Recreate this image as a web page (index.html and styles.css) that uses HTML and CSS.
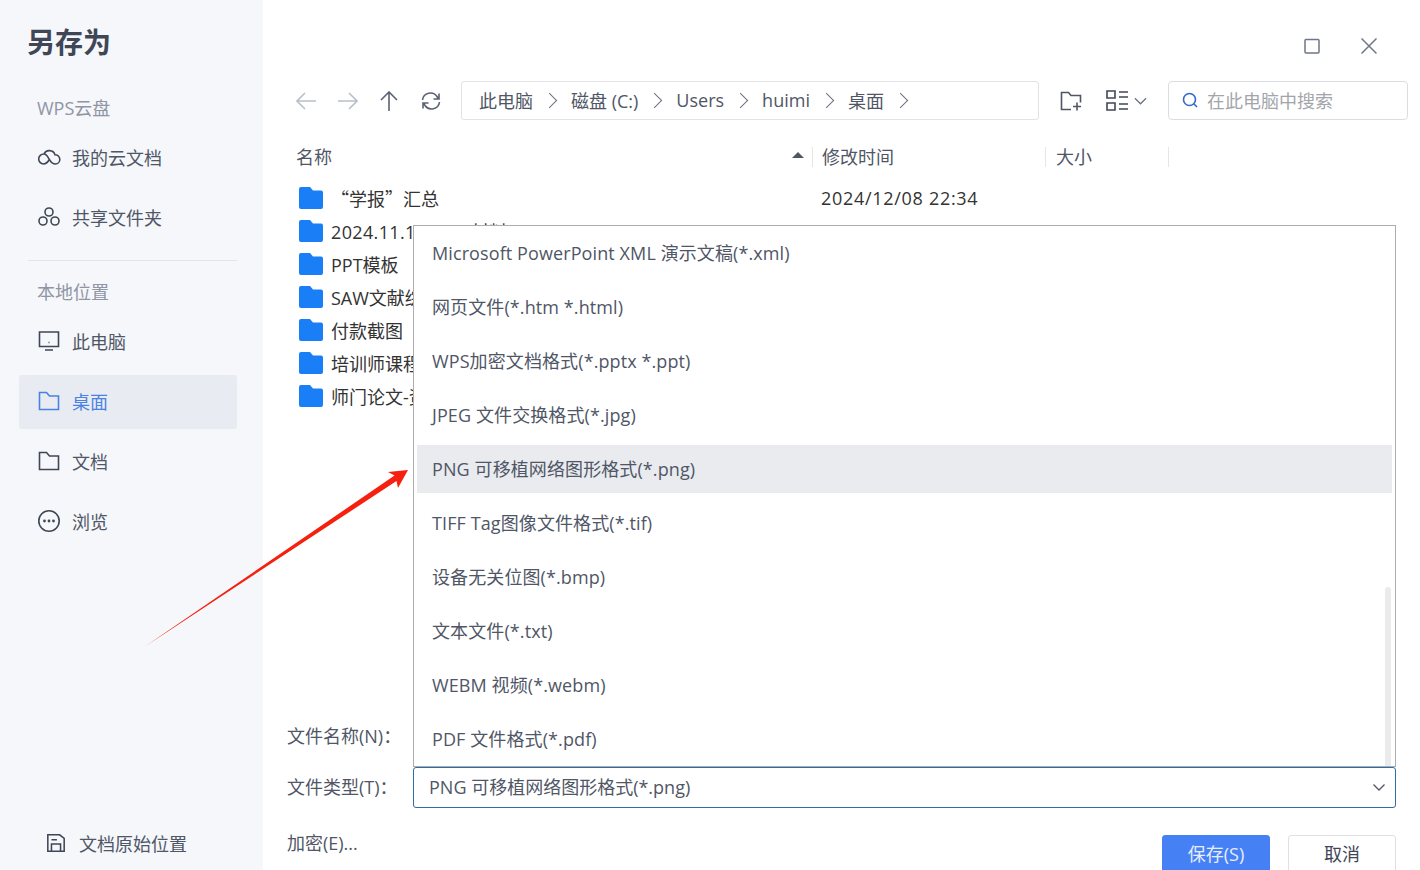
FILE: index.html
```html
<!DOCTYPE html>
<html lang="zh-CN">
<head>
    <meta charset="UTF-8">
    <meta name="viewport" content="width=device-width, initial-scale=1.0">
    <title>另存为</title>
    <link rel="stylesheet" href="styles.css">
</head>
<body>
    <div class="dialog">
        <!-- Left column -->
        <aside class="sidebar">
            <h1 class="title">另存为</h1>
            <div class="section-label">WPS云盘</div>
            <a class="nav-item">
                <svg class="nav-icon" viewBox="0 0 24 24"><path d="M6.500 19a5 5 0 1 1 .4-10A6 6 0 0 1 18 9.800a4.600 4.600 0 1 1 .4 9.200c-3.400 0-4.500-2.200-6-4.500s-2.600-5.500-5.500-5.500M6.500 19c3 0 4.500-2.200 5.900-4.500"/></svg>
                <span>我的云文档</span>
            </a>
            <a class="nav-item">
                <svg class="nav-icon" viewBox="0 0 24 24"><circle cx="12" cy="7" r="4"/><circle cx="6" cy="16" r="4"/><circle cx="18" cy="16" r="4"/></svg>
                <span>共享文件夹</span>
            </a>
            <div class="divider"></div>
            <div class="section-label">本地位置</div>
            <a class="nav-item">
                <svg class="nav-icon" viewBox="0 0 24 24"><path d="M2.500 3h19v14.500h-19zM8 21h8M11.500 13.500h1"/></svg>
                <span>此电脑</span>
            </a>
            <a class="nav-item active">
                <svg class="nav-icon" viewBox="0 0 24 24"><path d="M2.500 3.500h7l3 3.500h9v13.500h-19z"/></svg>
                <span>桌面</span>
            </a>
            <a class="nav-item">
                <svg class="nav-icon" viewBox="0 0 24 24"><path d="M2.500 3.500h7l3 3.500h9v13.500h-19z"/></svg>
                <span>文档</span>
            </a>
            <a class="nav-item">
                <svg class="nav-icon" viewBox="0 0 24 24"><circle cx="12" cy="12" r="10.200"/><circle class="dot" cx="7.500" cy="12" r="1.400"/><circle class="dot" cx="12" cy="12" r="1.400"/><circle class="dot" cx="16.500" cy="12" r="1.400"/></svg>
                <span>浏览</span>
            </a>
            <a class="origin-link">
                <svg class="origin-icon" viewBox="0 0 22 22"><path d="M2 2h13l5 4v14H2zM6 20v-8h10v8M6 7.500h6"/></svg>
                <span>文档原始位置</span>
            </a>
        </aside>

        <main class="content">
            <div class="window-controls">
                <svg class="win-btn" viewBox="0 0 16 16"><rect x="1" y="1.500" width="14" height="13.500" rx="1"/></svg>
                <svg class="win-btn" viewBox="0 0 16 16"><path d="M.5.500l15 15M15.500.500l-15 15"/></svg>
            </div>

            <div class="toolbar">
                <div class="nav-buttons">
                    <svg class="tool-icon off" viewBox="0 0 20 20"><path d="M20 10H1M9 2l-8 8 8 8"/></svg>
                    <svg class="tool-icon off" viewBox="0 0 20 20"><path d="M0 10h19M11 2l8 8-8 8"/></svg>
                    <svg class="tool-icon" viewBox="0 0 20 20"><path d="M10 20V1M2 9l8-8 8 8"/></svg>
                    <svg class="tool-icon" viewBox="0 0 20 20"><path d="M1.500 9A8 8 0 0 1 16 5.500l1.500 2.500M18.500 11A8 8 0 0 1 4 14.500L2.500 12M18 2.500v5.500h-5.500M2 17.500V12h5.500"/></svg>
                </div>
                <div class="breadcrumb">
                    <span>此电脑</span><i class="crumb-arrow"></i>
                    <span>磁盘 (C:)</span><i class="crumb-arrow"></i>
                    <span>Users</span><i class="crumb-arrow"></i>
                    <span>huimi</span><i class="crumb-arrow"></i>
                    <span>桌面</span><i class="crumb-arrow"></i>
                </div>
                <svg class="new-folder" viewBox="0 0 22 20"><path d="M11 18.500H1.500V1.500h7l2.500 3h9.500v7M13 15.500h8M17 11.500v8"/></svg>
                <div class="view-switch">
                    <svg class="view-icon" viewBox="0 0 22 21"><path d="M1 1h8v7H1zM1 13h8v7H1zM13 2h9M13 7h9M13 14h9M13 19h9"/></svg>
                    <svg class="view-chevron" viewBox="0 0 14 8"><path d="M1 1l6 6 6-6"/></svg>
                </div>
                <div class="search">
                    <svg class="search-icon" viewBox="0 0 16 16"><circle cx="7.500" cy="7.500" r="6"/><path d="M12 12l3 3"/></svg>
                    <span>在此电脑中搜索</span>
                </div>
            </div>

            <div class="list-header">
                <div class="col col-name">名称<i class="sort-up"></i></div>
                <div class="col col-date">修改时间</div>
                <div class="col col-size">大小</div>
            </div>

            <ul class="file-list">
                <li><svg class="folder" viewBox="0 0 24 22"><path d="M2 0h9l3 3.500h8a2 2 0 0 1 2 2V20a2 2 0 0 1-2 2H2a2 2 0 0 1-2-2V2a2 2 0 0 1 2-2z"/></svg><span class="file-name cjk-first">“学报”汇总</span><span class="file-date">2024/12/08 22:34</span></li>
                <li><svg class="folder" viewBox="0 0 24 22"><path d="M2 0h9l3 3.500h8a2 2 0 0 1 2 2V20a2 2 0 0 1-2 2H2a2 2 0 0 1-2-2V2a2 2 0 0 1 2-2z"/></svg><span class="file-name digits">2024.11.15—20 材料</span></li>
                <li><svg class="folder" viewBox="0 0 24 22"><path d="M2 0h9l3 3.500h8a2 2 0 0 1 2 2V20a2 2 0 0 1-2 2H2a2 2 0 0 1-2-2V2a2 2 0 0 1 2-2z"/></svg><span class="file-name">PPT模板</span></li>
                <li><svg class="folder" viewBox="0 0 24 22"><path d="M2 0h9l3 3.500h8a2 2 0 0 1 2 2V20a2 2 0 0 1-2 2H2a2 2 0 0 1-2-2V2a2 2 0 0 1 2-2z"/></svg><span class="file-name">SAW文献综述</span></li>
                <li><svg class="folder" viewBox="0 0 24 22"><path d="M2 0h9l3 3.500h8a2 2 0 0 1 2 2V20a2 2 0 0 1-2 2H2a2 2 0 0 1-2-2V2a2 2 0 0 1 2-2z"/></svg><span class="file-name">付款截图</span></li>
                <li><svg class="folder" viewBox="0 0 24 22"><path d="M2 0h9l3 3.500h8a2 2 0 0 1 2 2V20a2 2 0 0 1-2 2H2a2 2 0 0 1-2-2V2a2 2 0 0 1 2-2z"/></svg><span class="file-name">培训师课程</span></li>
                <li><svg class="folder" viewBox="0 0 24 22"><path d="M2 0h9l3 3.500h8a2 2 0 0 1 2 2V20a2 2 0 0 1-2 2H2a2 2 0 0 1-2-2V2a2 2 0 0 1 2-2z"/></svg><span class="file-name">师门论文-资料</span></li>
            </ul>

            <div class="form-row">
                <label class="form-label">文件名称(N)：</label>
            </div>
            <div class="form-row">
                <label class="form-label">文件类型(T)：</label>
                <div class="type-select">
                    <span class="type-value">PNG 可移植网络图形格式(*.png)</span>
                    <svg class="select-chevron" viewBox="0 0 12 7"><path d="M.500.500L6 6l5.500-5.500"/></svg>
                </div>
            </div>
            <div class="action-row">
                <span class="encrypt">加密(E)...</span>
                <button class="btn btn-primary">保存(S)</button>
                <button class="btn">取消</button>
            </div>

            <!-- Open dropdown of the file type select -->
            <div class="type-popup">
                <div class="type-option">Microsoft PowerPoint XML 演示文稿(*.xml)</div>
                <div class="type-option">网页文件(*.htm *.html)</div>
                <div class="type-option">WPS加密文档格式(*.pptx *.ppt)</div>
                <div class="type-option">JPEG 文件交换格式(*.jpg)</div>
                <div class="type-option selected">PNG 可移植网络图形格式(*.png)</div>
                <div class="type-option">TIFF Tag图像文件格式(*.tif)</div>
                <div class="type-option">设备无关位图(*.bmp)</div>
                <div class="type-option">文本文件(*.txt)</div>
                <div class="type-option">WEBM 视频(*.webm)</div>
                <div class="type-option">PDF 文件格式(*.pdf)</div>
                <div class="popup-scroll"></div>
            </div>
        </main>

        <!-- Red annotation arrow on top of the screenshot -->
        <svg class="annotation" viewBox="0 0 1420 870"><polygon points="145,646.500 394.500,475.500 388,472 408,470 398,488 396.500,481"/></svg>
    </div>
</body>
</html>
```

FILE: styles.css
```css
html, body {
    margin: 0;
    padding: 0;
    height: 870px;
    overflow: hidden;
    background-color: white;
}

body {
    font-family: "Open Sans", "Noto Sans CJK SC", sans-serif;
    font-size: 18px;
    color: #4f5666;
}

.dialog {
    position: relative;
    display: flex;
    height: 870px;
}

/* sidebar */
.sidebar {
    position: relative;
    width: 263px;
    height: 870px;
    flex-shrink: 0;
    box-sizing: border-box;
    padding: 22px 26px 0 19px;
    background-color: #f5f7fa;
}

.title {
    margin: 0 0 0 8px;
    font-size: 28px;
    line-height: 40px;
    font-weight: 700;
    color: #3f4757;
}

.section-label {
    margin: 29px 0 6px 18px;
    height: 34px;
    line-height: 34px;
    color: #8f95a5;
}

.nav-item {
    display: flex;
    align-items: center;
    height: 54px;
    box-sizing: border-box;
    margin-top: 6px;
    padding: 0 0 2px 18px;
    border-radius: 3px;
    color: #4f5666;
}

.section-label + .nav-item {
    margin-top: 0;
}

.nav-item span {
    margin-left: 11px;
}

.nav-item.active {
    background-color: #e8ebf1;
    color: #4a82e4;
}

.nav-icon {
    width: 24px;
    height: 24px;
    fill: none;
    stroke: currentColor;
    stroke-width: 1.600;
    color: #3f4757;
}

.nav-item.active .nav-icon {
    color: #4a82e4;
}

.nav-icon .dot {
    fill: currentColor;
    stroke: none;
}

.divider {
    height: 1px;
    margin: 15px 0 0 9px;
    background-color: #e3e5ea;
}

.divider + .section-label {
    margin-top: 14px;
}

.origin-link {
    position: absolute;
    left: 46px;
    bottom: 14px;
    display: flex;
    align-items: center;
}

.origin-link span {
    margin-left: 13px;
}

.origin-icon {
    width: 20px;
    height: 22px;
    fill: none;
    stroke: #3f4757;
    stroke-width: 1.700;
}

/* right side */
.content {
    position: relative;
    flex: 1;
    display: flex;
    flex-direction: column;
    min-width: 0;
    padding: 38px 12px 0 24px;
}

.window-controls {
    display: flex;
    justify-content: flex-end;
    gap: 41px;
    height: 16px;
    padding-right: 31px;
}

.win-btn {
    width: 16px;
    height: 16px;
    fill: none;
    stroke: #6f7686;
    stroke-width: 1.500;
}

.toolbar {
    display: flex;
    align-items: center;
    height: 39px;
    margin-top: 27px;
}

.nav-buttons {
    display: flex;
    align-items: center;
    gap: 21.500px;
    width: 174px;
    padding-left: 9px;
    box-sizing: border-box;
}

.tool-icon {
    width: 20px;
    height: 20px;
    flex-shrink: 0;
    fill: none;
    stroke: #5a6172;
    stroke-width: 1.600;
}

.tool-icon.off {
    stroke: #b9bec9;
}

.breadcrumb {
    display: flex;
    align-items: center;
    width: 578px;
    height: 39px;
    box-sizing: border-box;
    padding: 0 0 2px 17px;
    border: 1px solid #e3e3e6;
    border-radius: 3px;
    white-space: nowrap;
}

.crumb-arrow {
    width: 10px;
    height: 10px;
    margin: 2px 16px 0 11px;
    border-top: 1.500px solid #6a7080;
    border-right: 1.500px solid #6a7080;
    transform: rotate(45deg);
}

.new-folder {
    width: 22px;
    height: 20px;
    margin-left: 21px;
    fill: none;
    stroke: #4f5666;
    stroke-width: 1.600;
}

.view-switch {
    display: flex;
    align-items: center;
    gap: 6px;
    margin-left: 24px;
}

.view-icon {
    width: 22px;
    height: 21px;
    fill: none;
    stroke: #3f4757;
    stroke-width: 1.600;
}

.view-chevron {
    width: 13px;
    height: 8px;
    fill: none;
    stroke: #6a7080;
    stroke-width: 1.300;
}

.search {
    display: flex;
    align-items: center;
    width: 240px;
    height: 39px;
    margin-left: 21px;
    box-sizing: border-box;
    padding: 0 0 2px 13px;
    border: 1px solid #dcdde1;
    border-radius: 4px;
    color: #a3a5ab;
}

.search-icon {
    width: 16px;
    height: 16px;
    margin-right: 9px;
    fill: none;
    stroke: #3268c9;
    stroke-width: 1.600;
}

.list-header {
    display: flex;
    height: 20px;
    margin-top: 27px;
    line-height: 20px;
}

.col {
    position: relative;
    box-sizing: border-box;
    border-right: 1px solid #e6e6e8;
}

.col-name {
    width: 526px;
    padding-left: 9px;
}

.col-date {
    width: 233px;
    padding-left: 9px;
}

.col-size {
    width: 123px;
    padding-left: 10px;
}

.sort-up {
    position: absolute;
    top: 5px;
    right: 8px;
    border-left: 6px solid transparent;
    border-right: 6px solid transparent;
    border-bottom: 6px solid #4f5666;
}

.file-list {
    flex: 1;
    margin: 14px 0 0;
    padding: 0;
    list-style: none;
}

.file-list li {
    display: flex;
    align-items: center;
    height: 33px;
    padding-left: 12px;
    color: #333;
}

.folder {
    width: 24px;
    height: 22px;
    flex-shrink: 0;
    fill: #1a7ef7;
}

.file-name {
    width: 490px;
    margin-left: 8px;
    white-space: nowrap;
}

.file-name.digits {
    letter-spacing: .35px;
}

.file-date {
    letter-spacing: .7px;
}

.cjk-first {
    font-family: "Noto Sans CJK SC", sans-serif;
}

.form-row {
    display: flex;
    align-items: center;
    height: 41px;
    margin-bottom: 10px;
}

.form-label {
    width: 126px;
    padding-bottom: 4px;
    white-space: nowrap;
}

.type-select {
    display: flex;
    align-items: center;
    justify-content: space-between;
    width: 983px;
    height: 41px;
    box-sizing: border-box;
    padding: 0 10px 0 15px;
    border: 1px solid #2d6da8;
    border-radius: 3px;
}

.type-value {
    padding-bottom: 4px;
}

.select-chevron {
    width: 12px;
    height: 7px;
    fill: none;
    stroke: #4f5666;
    stroke-width: 1.300;
}

.action-row {
    display: flex;
    align-items: flex-start;
    height: 35px;
    margin-top: 17px;
    padding-right: 12px;
}

.encrypt {
    margin-top: -1px;
    line-height: 18px;
    margin-right: auto;
}

.btn {
    flex-shrink: 0;
    width: 108px;
    height: 40px;
    margin-left: 18px;
    padding: 0 0 5px;
    border: 1px solid #e0e0e3;
    border-radius: 3px;
    background-color: white;
    font-family: inherit;
    font-size: 18px;
    color: #3f4757;
}

.btn-primary {
    border-color: #4680f5;
    background-color: #4680f5;
    color: #e6eefd;
}

/* dropdown over the file list */
.type-popup {
    position: absolute;
    top: 225px;
    left: 150px;
    width: 983px;
    height: 542px;
    box-sizing: border-box;
    padding: 3px 3px 0;
    border: 1px solid #adadad;
    background-color: white;
}

.type-option {
    height: 48px;
    margin-bottom: 6px;
    padding-left: 15px;
    line-height: 48px;
    letter-spacing: .1px;
    white-space: nowrap;
}

.type-option.selected {
    background-color: #e9ebef;
}

.popup-scroll {
    position: absolute;
    top: 361px;
    right: 4px;
    bottom: 0;
    width: 6px;
    border-radius: 3px 3px 0 0;
    background-color: #ebebeb;
}

.annotation {
    position: absolute;
    top: 0;
    left: 0;
    width: 1420px;
    height: 870px;
    fill: #f5200f;
    pointer-events: none;
}
```
